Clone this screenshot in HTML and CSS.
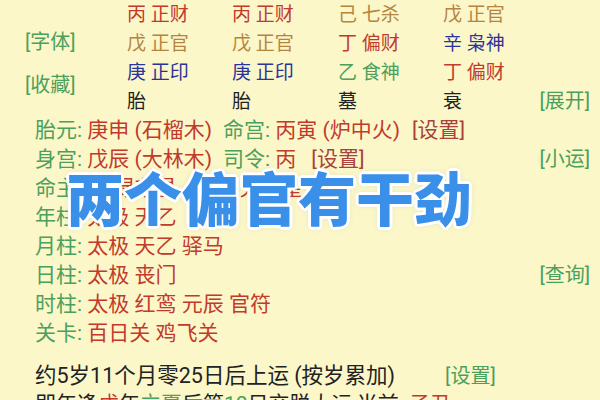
FILE: index.html
```html
<!DOCTYPE html>
<html lang="zh-CN">
<head>
<meta charset="utf-8">
<title>排盘</title>
<link rel="stylesheet" href="styles.css">
</head>
<body>
<div class="page">
  <div class="pillars">
    <div class="tools">
      <span class="g">[字体]</span>
      <span class="g fav">[收藏]</span>
    </div>
    <div class="c1 r1 red">丙 正财</div>
    <div class="c2 r1 red">丙 正财</div>
    <div class="c3 r1 tan">己 七杀</div>
    <div class="c4 r1 tan">戊 正官</div>
    <div class="c1 r2 tan">戊 正官</div>
    <div class="c2 r2 tan">戊 正官</div>
    <div class="c3 r2 red">丁 偏财</div>
    <div class="c4 r2 blue">辛 枭神</div>
    <div class="c1 r3 blue">庚 正印</div>
    <div class="c2 r3 blue">庚 正印</div>
    <div class="c3 r3 g">乙 食神</div>
    <div class="c4 r3 red">丁 偏财</div>
    <div class="c1 r4 k">胎</div>
    <div class="c2 r4 k">胎</div>
    <div class="c3 r4 k">墓</div>
    <div class="c4 r4 k">衰</div>
    <div class="c5 r4 side g">[展开]</div>
  </div>

  <div class="info">
    <div class="line"><span><span class="g">胎元: </span><span class="red">庚申 (石榴木)</span><span class="g lab2">命宫: </span><span class="red">丙寅 (炉中火)</span><span class="dred set">[设置]</span></span></div>
    <div class="line"><span><span class="g">身宫: </span><span class="red">戊辰 (大林木)</span><span class="g lab2">司令: </span><span class="red">丙</span><span class="dred set set2">[设置]</span></span><span class="side g">[小运]</span></div>
    <div class="line"><span><span class="g">命主: </span><span class="red">贾 禄存星</span><span class="g lab2">身主: </span><span class="red">天相星</span></span></div>
    <div class="line"><span><span class="g">年柱: </span><span class="red">太极 天乙</span></span></div>
    <div class="line"><span><span class="g">月柱: </span><span class="red">太极 天乙 驿马</span></span></div>
    <div class="line"><span><span class="g">日柱: </span><span class="red">太极 丧门</span></span><span class="side g">[查询]</span></div>
    <div class="line"><span><span class="g">时柱: </span><span class="red">太极 红鸾 元辰 官符</span></span></div>
    <div class="line"><span><span class="g">关卡: </span><span class="red">百日关 鸡飞关</span></span></div>
    <div class="line luck"><span class="k">约5岁11个月零25日后上运 (按岁累加)</span><span class="g luckset">[设置]</span></div>
    <div class="line"><span class="k">即年逢<span class="red">戊</span>年<span class="g">立夏</span>后第<span class="g">10</span>日交脱大运,当前: <span class="red">子丑</span></span></div>
  </div>

  <div class="overlay">两个偏官有干劲</div>
</div>
</body>
</html>
```

FILE: styles.css
```css
html, body {
  margin: 0;
  padding: 0;
}

body {
  background: #fbf7c9;
  font-family: Roboto, "Noto Sans CJK SC", sans-serif;
  font-size: 19px;
  color: #222;
}

.page {
  position: relative;
  width: 600px;
  height: 400px;
  overflow: hidden;
}

.red { color: #c23a2c; }
.dred { color: #a8423a; }
.tan { color: #b5843f; }
.blue { color: #2b339c; }
.g { color: #4ba05c; }
.k { color: #222; }

.pillars {
  display: grid;
  grid-template-columns: 127px 105px 106px 105px 1fr;
  grid-template-rows: repeat(4, 29px);
  line-height: 29px;
  white-space: nowrap;
}

.tools {
  grid-column: 1;
  grid-row: 1 / 5;
  display: flex;
  flex-direction: column;
  align-items: flex-start;
  padding: 28px 0 0 25px;
  font-size: 20px;
}

.tools .fav {
  margin-top: 14px;
}

.c1 { grid-column: 2; }
.c2 { grid-column: 3; }
.c3 { grid-column: 4; }
.c4 { grid-column: 5; }
.c5 { grid-column: 5; }

.r1 { grid-row: 1; }
.r2 { grid-row: 2; }
.r3 { grid-row: 3; }
.r4 { grid-row: 4; }

.side {
  font-size: 20px;
}

.pillars .side {
  justify-self: end;
  padding-right: 10px;
}

.info {
  padding-left: 35px;
  line-height: 29px;
  font-size: 21px;
  white-space: nowrap;
}

.line {
  display: flex;
  justify-content: space-between;
  align-items: baseline;
  height: 29px;
}

.line .side {
  padding-right: 10px;
}

.lab2 {
  margin-left: 11px;
}

.set {
  margin-left: 12px;
}

.set2 {
  margin-left: 15px;
}

.luck {
  margin-top: 13px;
  justify-content: flex-start;
  font-size: 21.5px;
}

.luckset {
  margin-left: 50px;
  font-size: 20px;
}

.overlay {
  position: absolute;
  left: 66px;
  top: 164px;
  font-size: 58px;
  font-weight: 900;
  line-height: 74px;
  color: #3a8fe8;
  text-shadow:
    3px 0 0 #fff, -3px 0 0 #fff, 0 3px 0 #fff, 0 -3px 0 #fff,
    2px 2px 0 #fff, -2px 2px 0 #fff, 2px -2px 0 #fff, -2px -2px 0 #fff,
    0 0 6px rgba(120, 140, 160, 0.45);
}
```
